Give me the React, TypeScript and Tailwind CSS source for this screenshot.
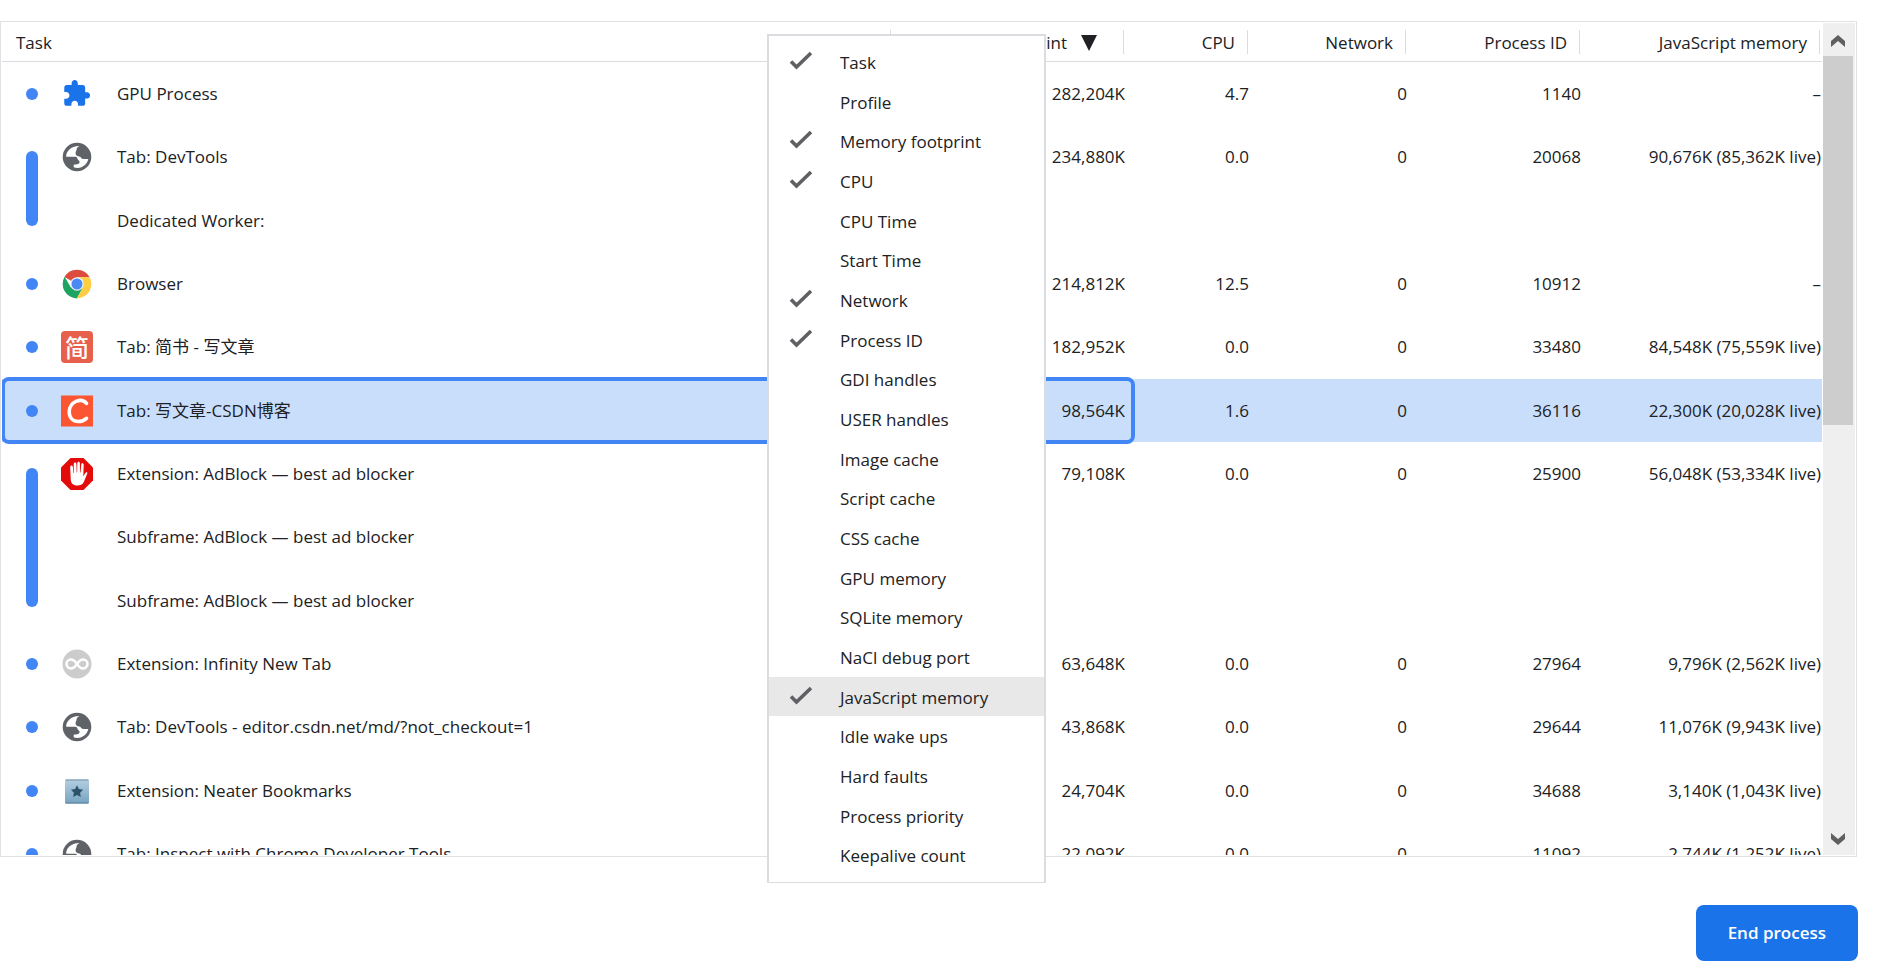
import { useState } from "react";

interface Task {
  name: string;
  memory?: string;
  cpu?: string;
  network?: string;
  pid?: string;
  jsMemory?: string;
  icon?: React.ReactNode;
  // number of rows that the process marker spans
  span?: number;
}

const PuzzleIcon = () => (
  <svg viewBox="0 0 32 32" className="w-8 h-8" fill="#1a73e8">
    <path
      transform="translate(.800 .800) scale(1.230)"
      d="M20.500 11H19V7c0-1.100-.9-2-2-2h-4V3.500C13 2.120 11.880 1 10.500 1S8 2.120 8 3.500V5H4c-1.100 0-1.990.9-1.990 2v3.800H3.500c1.490 0 2.700 1.210 2.700 2.700s-1.210 2.700-2.700 2.700H2V20c0 1.100.9 2 2 2h3.800v-1.500c0-1.490 1.210-2.700 2.700-2.700s2.700 1.210 2.700 2.700V22H17c1.100 0 2-.9 2-2v-4h1.500c1.380 0 2.500-1.120 2.500-2.500S21.880 11 20.500 11z"
    />
  </svg>
);

const GlobeIcon = () => (
  <svg viewBox="0 0 32 32" className="w-8 h-8">
    <circle cx="16" cy="16" r="14.300" fill="#5f6368" />
    <path
      fill="#fff"
      d="M18.500 4.900C16.500 6 15.500 7 15.500 8.700c0 1.200-.9 1.800-.9 3.300 0 1.700.6 2.600 2.400 3.200l2 .6c.7.2.8.9 1.300 1.500.6.6 1.400.7 2.200.7h4.800c-1 4.800-5.200 8.800-10.800 8.900-1.500 0-2.700-.2-3.800-.6v-2.600c3.400 0 5.900-.7 5.900-2.900 0-1.600-2-1.700-2.200-3.400-.2-1.200-1.600-1.600-3.400-1.600H5.200C4.800 10.500 10.200 4.600 18.500 4.900z"
    />
  </svg>
);

const ChromeIcon = () => (
  <svg viewBox="0 0 32 32" className="w-8 h-8">
    <path d="M16 16 3.400 9.100A14.400 14.400 0 0 1 28.700 9.300L16 9.300z" fill="#dd4b3e" />
    <path d="M3.600 8.800A14.400 14.400 0 0 0 15.800 30.400L22 19.500 16 16 9.900 19.500z" fill="#1da362" />
    <path d="M28.700 9.300A14.400 14.400 0 0 1 15.800 30.400L22 19.500 22 12 16 9.300z" fill="#ffcd42" />
    <circle cx="16" cy="16" r="6.700" fill="#f1f1f1" />
    <circle cx="16" cy="16" r="5.500" fill="#4a8af4" />
  </svg>
);

const JianshuIcon = () => (
  <span className="flex w-8 h-8 items-center justify-center rounded-sm bg-[#e6604b] text-white text-2xl leading-none font-medium font-['Noto_Sans_CJK_SC',sans-serif]">
    简
  </span>
);

const CsdnIcon = () => (
  <svg viewBox="0 0 32 32" className="w-8 h-8">
    <rect width="32" height="31" y=".500" fill="#fc5531" />
    <path
      d="M25.500 8.300C23 5.300 19 4.800 15.500 6.200 11 8 8.200 12.500 8.200 17c0 5.500 3.600 9.500 9.300 9.500 3.200 0 5.800-1.200 8-3.200"
      fill="none"
      stroke="#fff"
      strokeWidth="3.600"
      strokeLinecap="round"
    />
  </svg>
);

const AdBlockIcon = () => (
  <svg viewBox="0 0 32 32" className="w-8 h-8">
    <path d="M9.500 0h13L32 9.500v13L22.500 32h-13L0 22.500v-13z" fill="#e40b0b" />
    <path
      fill="#fff"
      d="M9.200 9.200c0-2.200 2.600-2.200 2.700 0l.4 5.800h.5l-.1-8.800c0-2.200 2.700-2.200 2.700 0l.3 8.300h.5l.1-9.200c0-2.100 2.600-2.100 2.600 0l.1 9.200h.5l.7-7.800c.2-2.100 2.600-1.900 2.500.2l-.4 11.600c.9-1.500 1.600-3.300 2.700-4.100.8-.6 1.600 0 1.300 1l-3.500 8.600c-1.300 2.600-3.400 3.500-6.500 3.500-4.500 0-6.400-2.500-6.600-6.300z"
    />
  </svg>
);

const InfinityIcon = () => (
  <svg viewBox="0 0 32 32" className="w-8 h-8">
    <circle cx="16" cy="16" r="14.500" fill="#ccc" />
    <path
      d="M16 16c-2-2.900-3.500-4.500-6-4.500a4.500 4.500 0 0 0 0 9c2.500 0 4-1.600 6-4.500s3.500-4.500 6-4.500a4.500 4.500 0 0 1 0 9c-2.500 0-4-1.600-6-4.500z"
      fill="none"
      stroke="#fff"
      strokeWidth="2.400"
    />
  </svg>
);

const BookmarkIcon = () => (
  <svg viewBox="0 0 32 32" className="w-8 h-8">
    <defs>
      <linearGradient id="bookmark" x1="0" y1="0" x2="0" y2="1">
        <stop offset="0" stopColor="#b4cfe0" />
        <stop offset="1" stopColor="#77a3c0" />
      </linearGradient>
    </defs>
    <rect x="4" y="4.500" width="24" height="24" rx="1.500" fill="url(#bookmark)" />
    <path d="M4.500 5h23" stroke="#6f8fa5" />
    <path d="M4.500 28h23" stroke="#557f9c" />
    <path
      d="m16 10.300 1.900 3.800 4.200.6-3 3 .7 4.200-3.800-2-3.800 2 .7-4.200-3-3 4.200-.6z"
      fill="#2d536b"
    />
  </svg>
);

const CheckIcon = () => (
  <svg viewBox="0 0 24 20" className="w-6 h-5">
    <path d="m2 10.500 5.500 5.500L22 2" fill="none" stroke="#5f6063" strokeWidth="3.600" />
  </svg>
);

const tasks: Task[] = [
  { name: "GPU Process", memory: "282,204K", cpu: "4.7", network: "0", pid: "1140", jsMemory: "–", icon: <PuzzleIcon />, span: 1 },
  { name: "Tab: DevTools", memory: "234,880K", cpu: "0.0", network: "0", pid: "20068", jsMemory: "90,676K (85,362K live)", icon: <GlobeIcon />, span: 2 },
  { name: "Dedicated Worker:" },
  { name: "Browser", memory: "214,812K", cpu: "12.5", network: "0", pid: "10912", jsMemory: "–", icon: <ChromeIcon />, span: 1 },
  { name: "Tab: 简书 - 写文章", memory: "182,952K", cpu: "0.0", network: "0", pid: "33480", jsMemory: "84,548K (75,559K live)", icon: <JianshuIcon />, span: 1 },
  { name: "Tab: 写文章-CSDN博客", memory: "98,564K", cpu: "1.6", network: "0", pid: "36116", jsMemory: "22,300K (20,028K live)", icon: <CsdnIcon />, span: 1 },
  { name: "Extension: AdBlock — best ad blocker", memory: "79,108K", cpu: "0.0", network: "0", pid: "25900", jsMemory: "56,048K (53,334K live)", icon: <AdBlockIcon />, span: 3 },
  { name: "Subframe: AdBlock — best ad blocker" },
  { name: "Subframe: AdBlock — best ad blocker" },
  { name: "Extension: Infinity New Tab", memory: "63,648K", cpu: "0.0", network: "0", pid: "27964", jsMemory: "9,796K (2,562K live)", icon: <InfinityIcon />, span: 1 },
  { name: "Tab: DevTools - editor.csdn.net/md/?not_checkout=1", memory: "43,868K", cpu: "0.0", network: "0", pid: "29644", jsMemory: "11,076K (9,943K live)", icon: <GlobeIcon />, span: 1 },
  { name: "Extension: Neater Bookmarks", memory: "24,704K", cpu: "0.0", network: "0", pid: "34688", jsMemory: "3,140K (1,043K live)", icon: <BookmarkIcon />, span: 1 },
  { name: "Tab: Inspect with Chrome Developer Tools", memory: "22,092K", cpu: "0.0", network: "0", pid: "11092", jsMemory: "2,744K (1,252K live)", icon: <GlobeIcon />, span: 1 },
];

const menuItems = [
  "Task",
  "Profile",
  "Memory footprint",
  "CPU",
  "CPU Time",
  "Start Time",
  "Network",
  "Process ID",
  "GDI handles",
  "USER handles",
  "Image cache",
  "Script cache",
  "CSS cache",
  "GPU memory",
  "SQLite memory",
  "NaCl debug port",
  "JavaScript memory",
  "Idle wake ups",
  "Hard faults",
  "Process priority",
  "Keepalive count",
];

const markerHeights: Record<number, string> = {
  1: "h-3",
  2: "h-[75px]",
  3: "h-[139px]",
};

const HeaderCell = ({ label, sorted = false }: { label: string; sorted?: boolean }) => (
  <th scope="col" className="p-0 border-b border-[#dadce0] font-normal">
    <div className="flex items-center justify-end h-6 mr-[2px] pt-[2px] pr-3 border-r border-[#dadce0] whitespace-nowrap">
      {label}
      {sorted && (
        <svg viewBox="0 0 16 16" className="w-4 h-4 mx-[14px]">
          <path d="M0 0h16L8 16z" fill="#202124" />
        </svg>
      )}
    </div>
  </th>
);

const ColumnMenu = () => {
  const [checked, setChecked] = useState([
    "Task",
    "Memory footprint",
    "CPU",
    "Network",
    "Process ID",
    "JavaScript memory",
  ]);

  const toggle = (item: string) =>
    setChecked((prev) =>
      prev.includes(item) ? prev.filter((i) => i !== item) : [...prev, item]
    );

  return (
    <div
      role="menu"
      className="absolute left-[767px] top-[34px] z-10 w-[279px] pt-[6px] pb-[7px] bg-white border-2 border-b border-[#dadce0]"
    >
      {menuItems.map((item) => (
        <button
          key={item}
          role="menuitemcheckbox"
          aria-checked={checked.includes(item)}
          onClick={() => toggle(item)}
          className={`flex items-center w-full h-10 nth-[3n+2]:h-[39px] pt-[2px] pl-5 text-left hover:bg-[#e8e8e8] ${
            item === "JavaScript memory" ? "bg-[#e8e8e8]" : ""
          }`}
        >
          <span className="w-[51px] pb-1">{checked.includes(item) && <CheckIcon />}</span>
          {item}
        </button>
      ))}
    </div>
  );
};

export default function App() {
  const [selected, setSelected] = useState(5);

  return (
    <div className="relative flex flex-col h-screen pt-[21px] pr-[23px] bg-white text-[17px] leading-6 text-[#202124] font-['Open_Sans','Noto_Sans_CJK_SC',sans-serif]">
      <div className="flex flex-1 min-h-0 p-px border border-[#dfe1e5] overflow-hidden">
        <div className="flex-1 min-w-0 overflow-hidden mr-px">
          <table className="w-full table-fixed border-separate border-spacing-0">
            <colgroup>
              <col />
              <col className="w-[234px]" />
              <col className="w-[124px]" />
              <col className="w-[158px]" />
              <col className="w-[174px]" />
              <col className="w-[240px]" />
            </colgroup>
            <thead>
              <tr className="h-[39px]">
                <th scope="col" className="p-0 border-b border-[#dadce0] font-normal text-left">
                  <div className="flex items-center h-6 pt-[2px] pl-[14px] mr-px border-r border-[#dadce0]">
                    Task
                  </div>
                </th>
                <HeaderCell label="Memory footprint" sorted />
                <HeaderCell label="CPU" />
                <HeaderCell label="Network" />
                <HeaderCell label="Process ID" />
                <HeaderCell label="JavaScript memory" />
              </tr>
            </thead>
            <tbody>
              {tasks.map((task, i) => (
                <tr
                  key={i}
                  onClick={() => setSelected(i)}
                  className={`relative h-[63px] nth-[3n+2]:h-16 text-right whitespace-nowrap ${
                    i === selected ? "bg-[#c9defb]" : ""
                  }`}
                >
                  <td className="p-0">
                    <div className="flex items-center text-left">
                      <span className="relative w-3 h-3 ml-6 mr-[23px]">
                        {task.span && (
                          <span
                            className={`absolute left-0 top-0 w-3 rounded-full bg-[#4285f4] ${markerHeights[task.span]}`}
                          />
                        )}
                      </span>
                      <span className="w-8 h-8 mr-6">{task.icon}</span>
                      {task.name}
                    </div>
                    {i === selected && (
                      <div className="absolute -inset-y-[2px] -left-px right-[687px] border-4 border-[#4285f4] rounded-lg pointer-events-none" />
                    )}
                  </td>
                  <td className="p-0 pr-px">{task.memory}</td>
                  <td className="p-0 pr-px">{task.cpu}</td>
                  <td className="p-0 pr-px">{task.network}</td>
                  <td className="p-0 pr-px">{task.pid}</td>
                  <td className="p-0 pr-px">{task.jsMemory}</td>
                </tr>
              ))}
            </tbody>
          </table>
        </div>

        {/* Scrollbar */}
        <div className="flex flex-col w-8 pr-[2px] bg-[#efefef]">
          <button aria-label="Scroll up" className="flex items-center justify-center h-[33px] pt-[2px] shrink-0">
            <svg viewBox="0 0 14 12" className="w-[14px] h-3">
              <path d="m0 12v-6l7-6 7 6v6l-7-6z" fill="#606060" />
            </svg>
          </button>
          <div className="h-[369px] bg-[#cdcdcd]" />
          <button aria-label="Scroll down" className="flex items-center justify-center h-8 mt-auto shrink-0">
            <svg viewBox="0 0 14 12" className="w-[14px] h-3">
              <path d="m0 0v6l7 6 7-6v-6l-7 6z" fill="#606060" />
            </svg>
          </button>
        </div>
      </div>

      <div className="flex justify-end pt-12 pb-[18px] -mr-px">
        <button className="h-14 px-8 rounded-lg bg-[#1a73e8] text-white font-semibold">
          End process
        </button>
      </div>

      <ColumnMenu />
    </div>
  );
}
